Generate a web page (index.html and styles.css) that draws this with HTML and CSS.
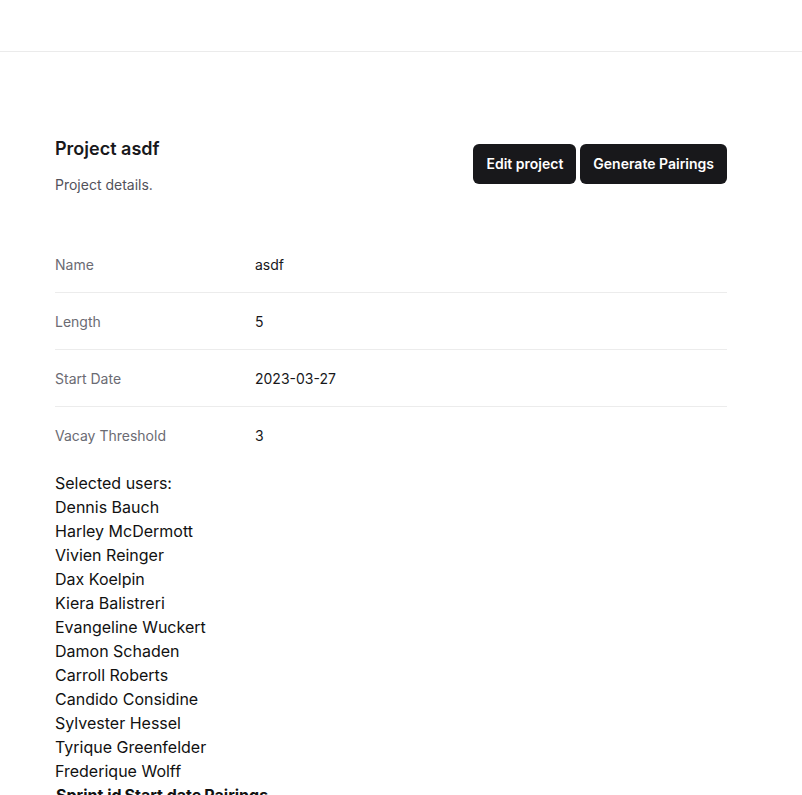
FILE: index.html
```html
<!DOCTYPE html>
<html>
<head>
<meta charset="utf-8">
<link rel="stylesheet" href="styles.css">
</head>
<body>
<header class="topbar"></header>
<main class="content">
  <div class="head">
    <div class="head-text">
      <h1 class="title">Project asdf</h1>
      <p class="subtitle">Project details.</p>
    </div>
    <div class="actions">
      <button class="btn">Edit project</button>
      <button class="btn">Generate Pairings</button>
    </div>
  </div>
  <dl class="details">
    <div class="row"><dt>Name</dt><dd>asdf</dd></div>
    <div class="row"><dt>Length</dt><dd>5</dd></div>
    <div class="row"><dt>Start Date</dt><dd>2023-03-27</dd></div>
    <div class="row last"><dt>Vacay Threshold</dt><dd>3</dd></div>
  </dl>
  <div class="users">
    <div>Selected users:</div>
    <div>Dennis Bauch</div>
    <div>Harley McDermott</div>
    <div>Vivien Reinger</div>
    <div>Dax Koelpin</div>
    <div>Kiera Balistreri</div>
    <div>Evangeline Wuckert</div>
    <div>Damon Schaden</div>
    <div>Carroll Roberts</div>
    <div>Candido Considine</div>
    <div>Sylvester Hessel</div>
    <div>Tyrique Greenfelder</div>
    <div>Frederique Wolff</div>
  </div>
  <table class="sprints">
    <thead><tr><th>Sprint id</th><th>Start date</th><th>Pairings</th></tr></thead>
  </table>
</main>
</body>
</html>
```
FILE: styles.css
```css
* { box-sizing: border-box; }
html, body { margin: 0; padding: 0; background: #fff; }
body {
  font-family: Inter, "Noto Sans", sans-serif;
  color: #111;
  font-size: 16px;
  line-height: 24px;
}
.topbar {
  height: 52px;
  border-bottom: 1px solid #ebebeb;
}
.content {
  padding: 83px 75px 0 55px;
}
.head {
  display: flex;
  align-items: flex-start;
  justify-content: space-between;
}
.title {
  margin: 0;
  font-size: 18px;
  line-height: 28px;
  font-weight: 600;
  color: #18181b;
}
.subtitle {
  margin: 12px 0 0;
  font-size: 14px;
  line-height: 20px;
  color: #52525b;
}
.actions {
  display: flex;
  gap: 4px;
  margin-top: 9px;
}
.btn {
  font-family: inherit;
  font-size: 14px;
  font-weight: 600;
  line-height: 20px;
  color: #fff;
  background: #18181b;
  border: none;
  border-radius: 6px;
  padding: 10px 13px;
  height: 40px;
}
.details {
  margin: 41px 0 0;
}
.row {
  display: grid;
  grid-template-columns: 200px 1fr;
  padding: 19px 0 17px;
  border-bottom: 1px solid #ececec;
  font-size: 14px;
  line-height: 20px;
}
.row.last { border-bottom: none; padding-bottom: 25px; }
.row dt { color: #6b6b73; }
.row dd { margin: 0; color: #18181b; }
.users {
  color: #111;
}
.sprints {
  border-spacing: 0;
  margin-left: 0;
}
.sprints th {
  padding: 0 2px 0 1px;
  font-weight: 700;
  text-align: left;
}
```
